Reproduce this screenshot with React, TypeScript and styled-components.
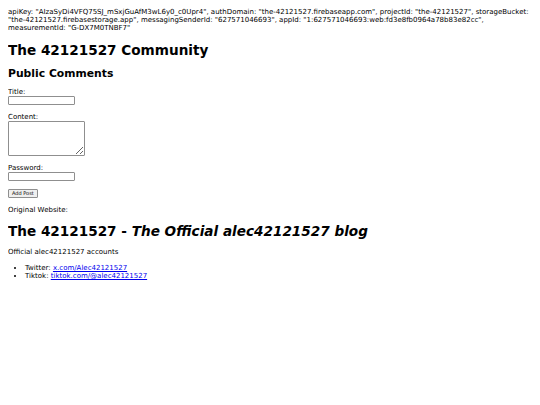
import styled, { createGlobalStyle } from "styled-components";

const GlobalStyle = createGlobalStyle`
  body {
    margin: 8px;
    font-family: "DejaVu Sans", Verdana, sans-serif;
    font-size: 7px;
    line-height: 8px;
    color: #000;
    background: #fff;
  }
`;

const Config = styled.div`
  margin: 0;
`;

const Title = styled.h1`
  font-size: 13.6px;
  line-height: 17px;
  font-weight: bold;
  margin: 10px 0 8px;
`;

const SubTitle = styled.h2`
  font-size: 10.8px;
  line-height: 13px;
  font-weight: bold;
  margin: 0 0 8px;
`;

const Form = styled.form`
  display: flex;
  flex-direction: column;
  align-items: flex-start;
`;

const Field = styled.div`
  display: flex;
  flex-direction: column;
  align-items: flex-start;
  margin-bottom: 8px;
`;

const Label = styled.label`
  font-size: 7px;
  line-height: 8px;
`;

const Input = styled.input`
  box-sizing: border-box;
  width: 67px;
  height: 9px;
  padding: 0;
  border: 1px solid #8f8f8f;
  border-radius: 1px;
  font-size: 6px;
`;

const TextArea = styled.textarea`
  box-sizing: border-box;
  width: 77px;
  height: 35px;
  padding: 0;
  border: 1px solid #8f8f8f;
  border-radius: 1px;
  font-size: 6px;
  resize: both;
`;

const Button = styled.button`
  box-sizing: border-box;
  height: 9px;
  padding: 0 3px;
  font-family: "DejaVu Sans", Verdana, sans-serif;
  font-size: 5px;
  line-height: 7px;
  border: 1px solid #8f8f8f;
  border-radius: 1px;
  background: #efefef;
  margin-bottom: 8px;
`;

const Para = styled.p`
  margin: 0 0 8px;
`;

const BlogTitle = styled.h1`
  font-size: 13.6px;
  line-height: 17px;
  font-weight: bold;
  margin: 9px 0 8px;
`;

const List = styled.ul`
  margin: 0;
  padding-left: 17px;
`;

const Link = styled.a`
  color: #0000ee;
`;

export default function App() {
  return (
    <>
      <GlobalStyle />
      <Config>
        apiKey: "AIzaSyDi4VFQ75SJ_mSxjGuAfM3wL6y0_c0Upr4", authDomain:
        "the-42121527.firebaseapp.com", projectId: "the-42121527",
        storageBucket: "the-42121527.firebasestorage.app", messagingSenderId:
        "627571046693", appId: "1:627571046693:web:fd3e8fb0964a78b83e82cc",
        measurementId: "G-DX7M0TNBF7"
      </Config>
      <Title>The 42121527 Community</Title>
      <SubTitle>Public Comments</SubTitle>
      <Form onSubmit={(e) => e.preventDefault()}>
        <Field>
          <Label htmlFor="title">Title:</Label>
          <Input id="title" type="text" />
        </Field>
        <Field>
          <Label htmlFor="content">Content:</Label>
          <TextArea id="content" />
        </Field>
        <Field>
          <Label htmlFor="password">Password:</Label>
          <Input id="password" type="password" />
        </Field>
        <Button type="submit">Add Post</Button>
      </Form>
      <Para>Original Website:</Para>
      <BlogTitle>
        The 42121527 - <em>The Official alec42121527 blog</em>
      </BlogTitle>
      <Para>Official alec42121527 accounts</Para>
      <List>
        <li>
          Twitter: <Link href="#">x.com/Alec42121527</Link>
        </li>
        <li>
          Tiktok: <Link href="#">tiktok.com/@alec42121527</Link>
        </li>
      </List>
    </>
  );
}
